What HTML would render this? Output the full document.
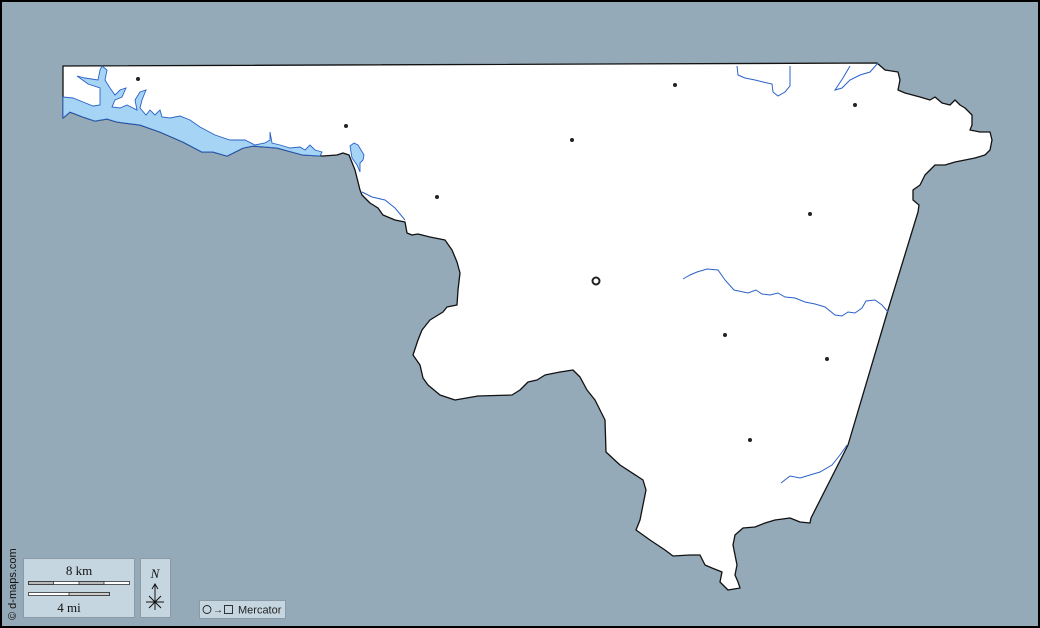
<!DOCTYPE html>
<html><head><meta charset="utf-8"><style>
html,body{margin:0;padding:0;background:#000;}
svg{display:block;}
</style></head><body>
<svg width="1040" height="628" viewBox="0 0 1040 628" xmlns="http://www.w3.org/2000/svg">
<rect x="0" y="0" width="1040" height="628" fill="#000"/>
<rect x="2" y="2" width="1036" height="624" fill="#94aab9"/>
<path fill="#fff" stroke="#111" stroke-width="1.3" stroke-linejoin="round" d="M63,66 L877,63 L885,70 L898,72 L900,80 L898,90 L905,93 L920,97 L930,100 L935,97 L942,103 L950,105 L955,100 L960,105 L965,108 L972,115 L972,125 L970,130 L980,132 L990,132 L992,140 L990,150 L985,155 L975,158 L965,160 L955,162 L945,165 L935,165 L925,175 L920,185 L913,190 L913,200 L919,205 L918,212 L888,310 L848,445 L811,518 L810,523 L800,522 L790,518 L775,520 L765,523 L755,527 L743,528 L735,535 L733,545 L735,555 L737,565 L735,575 L738,582 L740,588 L728,590 L720,582 L722,572 L712,568 L705,565 L700,555 L690,555 L673,556 L665,550 L650,540 L636,530 L640,520 L646,490 L643,480 L620,465 L606,452 L605,420 L600,410 L595,400 L587,390 L580,377 L573,370 L560,372 L545,375 L537,380 L528,382 L520,390 L512,395 L478,396 L455,400 L440,395 L428,385 L423,378 L420,365 L413,355 L418,340 L422,330 L430,320 L443,312 L447,307 L457,305 L458,290 L460,273 L457,262 L452,250 L445,240 L430,237 L418,234 L412,235 L407,233 L405,222 L395,220 L383,215 L378,208 L370,203 L362,195 L360,190 L355,170 L349,155 L343,153 L337,155 L323,156 L303,155 L277,148 L253,146 L243,148 L227,156 L213,152 L202,152 L183,142 L160,132 L140,125 L117,122 L107,119 L95,121 L83,117 L70,112 L63,118 Z"/>
<path fill="#a6d4f5" stroke="#2a62c8" stroke-width="0.9" d="M63,97 L73,98 L83,102 L93,106 L100,105 L100,95 L100,88 L88,84 L77,76 L85,78 L98,80 L100,70 L102,66 L107,70 L105,80 L110,88 L115,95 L120,90 L126,88 L122,97 L115,100 L112,107 L120,108 L127,105 L133,108 L137,110 L135,100 L140,92 L146,90 L142,100 L140,108 L146,115 L150,110 L155,115 L160,110 L162,117 L170,118 L180,116 L190,120 L200,127 L215,135 L230,140 L245,140 L255,145 L265,143 L270,140 L270,132 L272,143 L280,145 L290,148 L300,147 L305,150 L310,145 L315,150 L322,152 L320,156 L303,155 L277,148 L253,146 L243,148 L227,156 L213,152 L202,152 L183,142 L160,132 L140,125 L117,122 L107,119 L95,121 L83,117 L70,112 L63,118 Z"/>
<path fill="#a6d4f5" stroke="#2a62c8" stroke-width="0.9" d="M350,146 L354,143 L358,145 L364,155 L363,160 L360,163 L360,172 L357,165 L352,158 Z"/>
<g fill="none" stroke="#2a62c8" stroke-width="1">
<path d="M683,279 L690,275 L697,272 L707,269 L718,270 L725,280 L734,290 L748,293 L756,290 L762,294 L770,295 L778,293 L785,297 L795,298 L805,302 L815,304 L825,307 L835,315 L842,316 L848,312 L855,313 L862,308 L866,301 L875,300 L882,305 L888,312"/>
<path d="M781,483 L790,476 L800,478 L810,475 L820,472 L832,465 L840,455 L847,445"/>
<path d="M737,66 L738,75 L745,78 L755,80 L763,82 L772,84 L773,92 L778,96 L785,92 L790,86 L790,66"/>
<path d="M850,66 L843,78 L835,90 L842,88 L850,80 L860,75 L870,72 L878,63"/>
<path d="M362,192 L372,197 L385,200 L395,208 L405,220"/>
</g>
<g fill="#222">
<circle cx="138" cy="79" r="2"/><circle cx="346" cy="126" r="2"/><circle cx="572" cy="140" r="2"/><circle cx="675" cy="85" r="2"/><circle cx="855" cy="105" r="2"/><circle cx="437" cy="197" r="2"/><circle cx="810" cy="214" r="2"/><circle cx="725" cy="335" r="2"/><circle cx="827" cy="359" r="2"/><circle cx="750" cy="440" r="2"/>
</g>
<circle cx="596" cy="281" r="3.5" fill="#fff" stroke="#222" stroke-width="2"/>
<text x="16" y="620" transform="rotate(-90 16 620)" font-family="Liberation Sans, sans-serif" font-size="11" fill="#111">© d-maps.com</text>
<rect x="23.5" y="558.5" width="111" height="59" fill="#c6d6e0" stroke="#8a9aa6"/>
<text x="79" y="575" text-anchor="middle" font-family="Liberation Serif, serif" font-size="13" fill="#111">8 km</text>
<rect x="28.5" y="581.5" width="101" height="3" fill="#fff" stroke="#333" stroke-width="0.8"/>
<rect x="28.5" y="581.5" width="25" height="3" fill="#bbb" stroke="#333" stroke-width="0.8"/>
<rect x="79" y="581.5" width="25" height="3" fill="#bbb" stroke="#333" stroke-width="0.8"/>
<rect x="28.5" y="592.5" width="81" height="3" fill="#fff" stroke="#333" stroke-width="0.8"/>
<rect x="69" y="592.5" width="40.5" height="3" fill="#ccc" stroke="#333" stroke-width="0.8"/>
<text x="69" y="612" text-anchor="middle" font-family="Liberation Serif, serif" font-size="13" fill="#111">4 mi</text>
<rect x="140.5" y="558.5" width="30" height="59" fill="#c6d6e0" stroke="#8a9aa6"/>
<text x="155" y="578" text-anchor="middle" font-family="Liberation Serif, serif" font-style="italic" font-size="13" fill="#111">N</text>
<g stroke="#111" stroke-width="1" fill="none">
<path d="M155,610 L155,584 M152,589 L155,584 L158,589 M146,602 L164,602 M149,596 L161,608 M161,596 L149,608"/>
</g>
<rect x="199.5" y="600.5" width="86" height="18" fill="#c6d6e0" stroke="#8a9aa6"/>
<circle cx="207" cy="609.5" r="4" fill="none" stroke="#222" stroke-width="0.9"/>
<text x="213" y="613" font-family="Liberation Sans, sans-serif" font-size="10" fill="#222">→</text>
<rect x="224.5" y="605.5" width="8" height="8" fill="none" stroke="#222" stroke-width="0.9"/>
<text x="238" y="613.5" font-family="Liberation Sans, sans-serif" font-size="11" fill="#222">Mercator</text>
</svg>
</body></html>
